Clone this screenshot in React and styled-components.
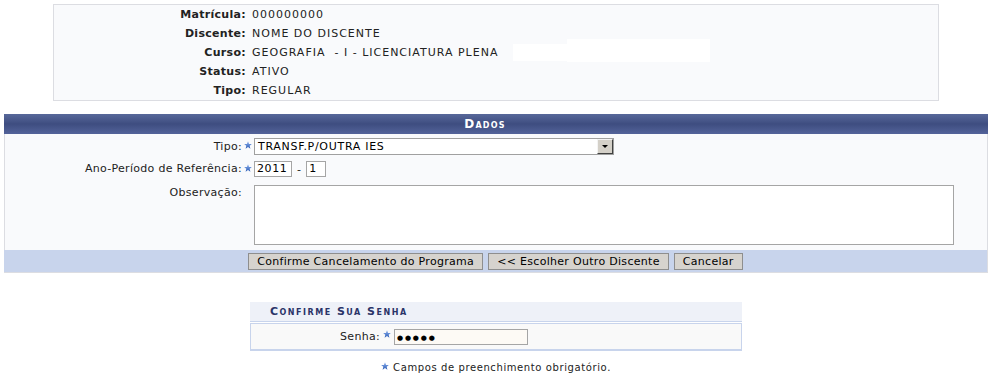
import styled, { createGlobalStyle } from 'styled-components'

const GlobalStyle = createGlobalStyle`
  body {
    margin: 0;
    background: #fff;
    font-family: "DejaVu Sans", Verdana, sans-serif;
    font-size: 11px;
    letter-spacing: 0.3px;
    color: #222;
  }
`

const Page = styled.div`
  width: 992px;
  padding-top: 4px;
`

const InfoBox = styled.div`
  position: relative;
  box-sizing: border-box;
  width: 886px;
  margin-left: 53px;
  background: #f9fafc;
  border: 1px solid #dcdde2;
  display: grid;
  grid-template-columns: 192px 1fr;
  column-gap: 6px;
`

const InfoLabel = styled.div`
  font-weight: bold;
  text-align: right;
  line-height: 19px;
  color: #222;
`

const InfoValue = styled.div`
  line-height: 19px;
  color: #222;
  white-space: pre;
  letter-spacing: 1px;
`

const Redact = styled.div`
  position: absolute;
  background: #fff;
  left: ${(p) => p.$x}px;
  top: ${(p) => p.$y}px;
  width: ${(p) => p.$w}px;
  height: ${(p) => p.$h}px;
`

const Panel = styled.div`
  margin: 13px 4px 0 4px;
  width: 984px;
`

const PanelHeader = styled.div`
  height: 20px;
  line-height: 20px;
  background: linear-gradient(#58689a, #3e4d80 50%, #53639a);
  color: #fff;
  font-size: 12px;
  font-weight: bold;
  font-variant: small-caps;
  letter-spacing: 1.2px;
  text-align: center;
  padding-right: 22px;
`

const PanelBody = styled.div`
  background: #f9fafc;
  border-left: 1px solid #dcdde2;
  border-right: 1px solid #dcdde2;
  padding: 4px 0 5px;
  display: flex;
  flex-direction: column;
  gap: 6px;
`

const FormRow = styled.div`
  display: grid;
  grid-template-columns: 237px 12px 1fr;
  align-items: ${(p) => (p.$top ? 'start' : 'center')};
  margin-top: ${(p) => (p.$top ? 2 : 0)}px;
`

const FieldLabel = styled.div`
  text-align: right;
  line-height: ${(p) => (p.$top ? '15px' : '16px')};
`

const StarCell = styled.div`
  display: flex;
  justify-content: center;
  align-self: start;
  padding-top: ${(p) => p.$pt ?? 3}px;
`

const Field = styled.div`
  display: flex;
  align-items: center;
  gap: 5px;
`

const SelectBox = styled.div`
  box-sizing: border-box;
  width: 360px;
  height: 17px;
  border: 1px solid #a0a0a0;
  background: #fff;
  display: flex;
  align-items: center;
  justify-content: space-between;
  padding-left: 3px;
  letter-spacing: 0.7px;
  color: #000;
`

const SelectArrow = styled.div`
  box-sizing: border-box;
  width: 16px;
  height: 15px;
  background: #d4d0c8;
  border-top: 1px solid #f4f4f4;
  border-left: 1px solid #f4f4f4;
  border-right: 1px solid #404040;
  border-bottom: 1px solid #404040;
  display: flex;
  align-items: center;
  justify-content: center;

  &::after {
    content: '';
    border-left: 3px solid transparent;
    border-right: 3px solid transparent;
    border-top: 3px solid #000;
  }
`

const TextInput = styled.div`
  box-sizing: border-box;
  width: ${(p) => p.$w}px;
  height: 16px;
  line-height: 14px;
  border: 1px solid #a5a5a5;
  background: ${(p) => p.$bg || '#fff'};
  padding-left: 2px;
  color: #000;
  letter-spacing: 0.6px;
`

const TextArea = styled.div`
  box-sizing: border-box;
  width: 700px;
  height: 60px;
  border: 1px solid #a5a5a5;
  background: #fff;
`

const ButtonBar = styled.div`
  height: 22px;
  background: #c8d4ec;
  border-right: 1px solid #dcdde2;
  border-bottom: 1px solid #dcdde2;
  display: flex;
  align-items: center;
  justify-content: center;
  gap: 5px;
`

const Button = styled.button`
  height: 17px;
  padding: 0 8px;
  margin: 0;
  font-family: inherit;
  font-size: 11px;
  letter-spacing: 0.3px;
  color: #000;
  background: #d6d3ce;
  border: 1px solid #8e8e8e;
  line-height: 15px;
`

const SenhaBox = styled.div`
  width: 492px;
  margin: 29px auto 0;
`

const SenhaHeader = styled.div`
  height: 19px;
  line-height: 19px;
  background: #eef1f8;
  border-bottom: 1px solid #c8d4ec;
  padding-left: 20px;
  color: #2a3468;
  font-weight: bold;
  font-variant: small-caps;
  letter-spacing: 1.5px;
`

const SenhaRow = styled.div`
  box-sizing: border-box;
  height: 28px;
  margin-top: 1px;
  background: #f9f9f9;
  border: 1px solid #c8d4ec;
  border-bottom-width: 2px;
  display: grid;
  grid-template-columns: 129px 14px 1fr;
  align-items: center;
`

const Dots = styled.span`
  font-size: 7px;
  letter-spacing: 1.8px;
`

const Footer = styled.div`
  margin-top: 11px;
  display: flex;
  justify-content: center;
  align-items: flex-start;
  gap: 4px;
  font-size: 10px;
  letter-spacing: 0.6px;
  color: #222;
`

function Star() {
  return (
    <svg width="8" height="8" viewBox="0 0 10 10">
      <defs>
        <linearGradient id="sg" x1="0" y1="0" x2="0" y2="1">
          <stop offset="0" stopColor="#8fb2ee" />
          <stop offset="1" stopColor="#2b5cb6" />
        </linearGradient>
      </defs>
      <polygon
        points="5,0.3 6.3,3.6 9.8,3.8 7.1,6 8,9.6 5,7.6 2,9.6 2.9,6 0.2,3.8 3.7,3.6"
        fill="url(#sg)"
      />
    </svg>
  )
}

const info = [
  ['Matrícula:', '000000000'],
  ['Discente:', 'NOME DO DISCENTE'],
  ['Curso:', 'GEOGRAFIA  - I - LICENCIATURA PLENA'],
  ['Status:', 'ATIVO'],
  ['Tipo:', 'REGULAR'],
]

export default function App() {
  return (
    <Page>
      <GlobalStyle />
      <InfoBox>
        {info.flatMap(([label, value]) => [
          <InfoLabel key={label}>{label}</InfoLabel>,
          <InfoValue key={label + 'v'}>{value}</InfoValue>,
        ])}
        <Redact $x={459} $y={39} $w={55} $h={17} />
        <Redact $x={513} $y={34} $w={143} $h={23} />
      </InfoBox>

      <Panel>
        <PanelHeader>Dados</PanelHeader>
        <PanelBody>
          <FormRow>
            <FieldLabel>Tipo:</FieldLabel>
            <StarCell><Star /></StarCell>
            <Field>
              <SelectBox>
                TRANSF.P/OUTRA IES
                <SelectArrow />
              </SelectBox>
            </Field>
          </FormRow>
          <FormRow>
            <FieldLabel>Ano-Período de Referência:</FieldLabel>
            <StarCell><Star /></StarCell>
            <Field>
              <TextInput $w={38}>2011</TextInput>
              -
              <TextInput $w={20}>1</TextInput>
            </Field>
          </FormRow>
          <FormRow $top>
            <FieldLabel $top>Observação:</FieldLabel>
            <div />
            <Field>
              <TextArea />
            </Field>
          </FormRow>
        </PanelBody>
        <ButtonBar>
          <Button>Confirme Cancelamento do Programa</Button>
          <Button>&lt;&lt; Escolher Outro Discente</Button>
          <Button>Cancelar</Button>
        </ButtonBar>
      </Panel>

      <SenhaBox>
        <SenhaHeader>Confirme Sua Senha</SenhaHeader>
        <SenhaRow>
          <FieldLabel>Senha:</FieldLabel>
          <StarCell $pt={6}><Star /></StarCell>
          <Field>
            <TextInput $w={134} $bg="#fdfaf5"><Dots>●●●●●</Dots></TextInput>
          </Field>
        </SenhaRow>
      </SenhaBox>

      <Footer>
        <Star />
        <span>Campos de preenchimento obrigatório.</span>
      </Footer>
    </Page>
  )
}
